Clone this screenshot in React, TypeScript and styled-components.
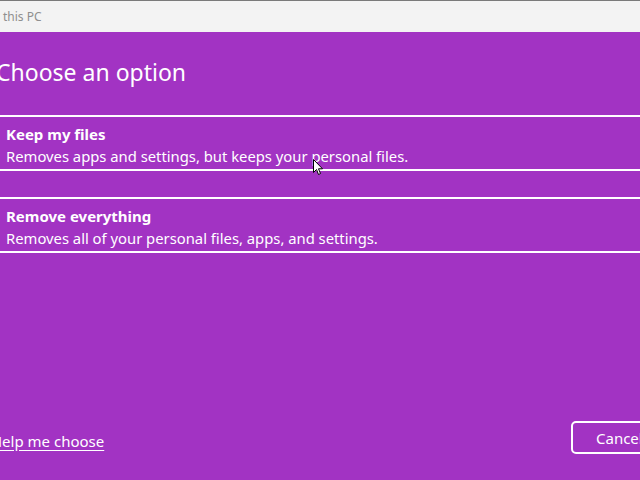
import React from "react";
import styled, { createGlobalStyle } from "styled-components";

const Global = createGlobalStyle`
  html, body { margin: 0; padding: 0; overflow: hidden; }
  body { width: 640px; height: 480px; font-family: "Noto Sans", "Open Sans", sans-serif; }
`;

const Window = styled.div`
  position: relative;
  width: 640px;
  height: 480px;
  display: flex;
  flex-direction: column;
  background: #a233c3;
  overflow: hidden;
`;

const TitleBar = styled.div`
  height: 31px;
  flex: 0 0 31px;
  background: #f3f3f3;
  border-top: 1px solid #7a7a7a;
  display: flex;
  align-items: center;
  padding-left: 3px;
  color: #8f8f8f;
  font-size: 12px;
  white-space: nowrap;
`;

const Body = styled.div`
  flex: 1;
  display: flex;
  flex-direction: column;
  padding: 0 0 0 6px;
  color: #ffffff;
`;

const Heading = styled.h1`
  margin: 20px 0 0 -10px;
  font-size: 23px;
  font-weight: 400;
  line-height: 40px;
  white-space: nowrap;
`;

const Options = styled.div`
  display: flex;
  flex-direction: column;
  gap: 26px;
  margin: 23px -20px 0 -26px;
`;

const Option = styled.div`
  border: 2px solid #ffffff;
  padding: 6px 0 0 24px;
  box-sizing: border-box;
  height: 56px;
  display: flex;
  flex-direction: column;
`;

const OptionTitle = styled.div`
  font-size: 15px;
  font-weight: 700;
  line-height: 22px;
  white-space: nowrap;
`;

const OptionDesc = styled.div`
  font-size: 14.8px;
  font-weight: 400;
  line-height: 22px;
  white-space: nowrap;
`;

const Footer = styled.div`
  margin-top: auto;
  margin-bottom: 26px;
  display: flex;
  align-items: center;
  justify-content: space-between;
`;

const HelpLink = styled.a`
  margin: 6px 0 0 -15px;
  color: #ffffff;
  font-size: 15px;
  text-decoration: underline;
  text-underline-offset: 3px;
  white-space: nowrap;
`;

const CancelButton = styled.button`
  width: 100px;
  height: 33px;
  margin-right: -31px;
  border: 2px solid #ffffff;
  border-radius: 5px;
  background: transparent;
  color: #ffffff;
  font-family: inherit;
  font-size: 15px;
  text-align: left;
  padding: 0 0 0 23px;
`;

const Cursor = styled.svg`
  position: absolute;
  left: 313px;
  top: 159px;
`;

export default function App() {
  return (
    <Window>
      <Global />
      <TitleBar>this PC</TitleBar>
      <Body>
        <Heading>Choose an option</Heading>
        <Options>
          <Option>
            <OptionTitle>Keep my files</OptionTitle>
            <OptionDesc>Removes apps and settings, but keeps your personal files.</OptionDesc>
          </Option>
          <Option>
            <OptionTitle>Remove everything</OptionTitle>
            <OptionDesc>Removes all of your personal files, apps, and settings.</OptionDesc>
          </Option>
        </Options>
        <Footer>
          <HelpLink>Help me choose</HelpLink>
          <CancelButton>Cancel</CancelButton>
        </Footer>
      </Body>
      <Cursor width="11" height="17" viewBox="0 0 11 17">
        <path d="M0.5 0.5 L0.5 13.5 L3.5 10.5 L5.5 15.5 L7.5 14.5 L5.5 9.8 L9.5 9.8 Z" fill="#ffffff" stroke="#000000" strokeWidth="1" />
      </Cursor>
    </Window>
  );
}
